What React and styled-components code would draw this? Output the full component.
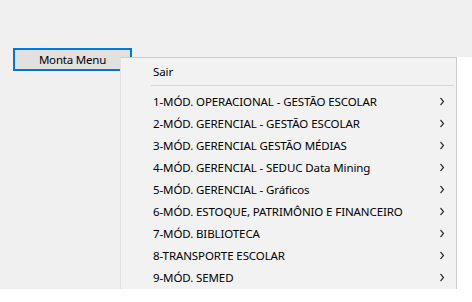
import React from "react";
import styled, { createGlobalStyle } from "styled-components";

const GlobalStyle = createGlobalStyle`
  html, body {
    margin: 0;
    padding: 0;
    background: #ffffff;
  }
  body {
    font-family: "Noto Sans", "Open Sans", sans-serif;
  }
`;

const Form = styled.div`
  position: relative;
  width: 472px;
  height: 289px;
  background: #f0f0f0;
  padding: 48px 0 0 13px;
  box-sizing: border-box;
`;

const MenuButton = styled.button`
  width: 119px;
  height: 23px;
  box-sizing: border-box;
  border: 2px solid #0078d7;
  background: #e1e1e1;
  color: #000;
  font-family: "Noto Sans", sans-serif;
  font-size: 11.5px;
  letter-spacing: -0.2px;
  padding: 0 0 1px;
  display: flex;
  align-items: center;
  justify-content: center;
  cursor: default;
`;

const Menu = styled.div`
  position: absolute;
  left: 120px;
  top: 57px;
  width: 337px;
  height: 232px;
  box-sizing: border-box;
  background: #f2f2f2;
  border: 1px solid #cccccc;
  border-left-color: #e2e2e2;
  border-bottom: none;
  padding: 2px 0 0;
  box-shadow: 15px 0 0 #ffffff;
  display: flex;
  flex-direction: column;
`;

const Item = styled.div`
  height: 22px;
  display: flex;
  align-items: center;
  padding: 0 11px 0 32px;
  font-size: 11.5px;
  color: #000;
  white-space: nowrap;
`;

const Label = styled.span`
  flex: 1;
  letter-spacing: -0.1px;
`;

const Separator = styled.div`
  height: 1px;
  background: #d7d7d7;
  margin: 3px 2px 4px 30px;
`;

const Chevron = () => (
  <svg width="6" height="9" viewBox="0 0 6 9">
    <polyline points="1.5,1 4.5,4.5 1.5,8" fill="none" stroke="#333" strokeWidth="1.2" />
  </svg>
);

const items = [
  "1-MÓD. OPERACIONAL - GESTÃO ESCOLAR",
  "2-MÓD. GERENCIAL - GESTÃO ESCOLAR",
  "3-MÓD. GERENCIAL GESTÃO MÉDIAS",
  "4-MÓD. GERENCIAL - SEDUC Data Mining",
  "5-MÓD. GERENCIAL - Gráficos",
  "6-MÓD. ESTOQUE, PATRIMÔNIO E FINANCEIRO",
  "7-MÓD. BIBLIOTECA",
  "8-TRANSPORTE ESCOLAR",
  "9-MÓD. SEMED",
];

const App = () => {
  return (
    <>
      <GlobalStyle />
      <Form>
        <MenuButton>Monta Menu</MenuButton>
        <Menu>
          <Item>
            <Label>Sair</Label>
          </Item>
          <Separator />
          {items.map((text) => (
            <Item key={text}>
              <Label>{text}</Label>
              <Chevron />
            </Item>
          ))}
        </Menu>
      </Form>
    </>
  );
};

export default App;
